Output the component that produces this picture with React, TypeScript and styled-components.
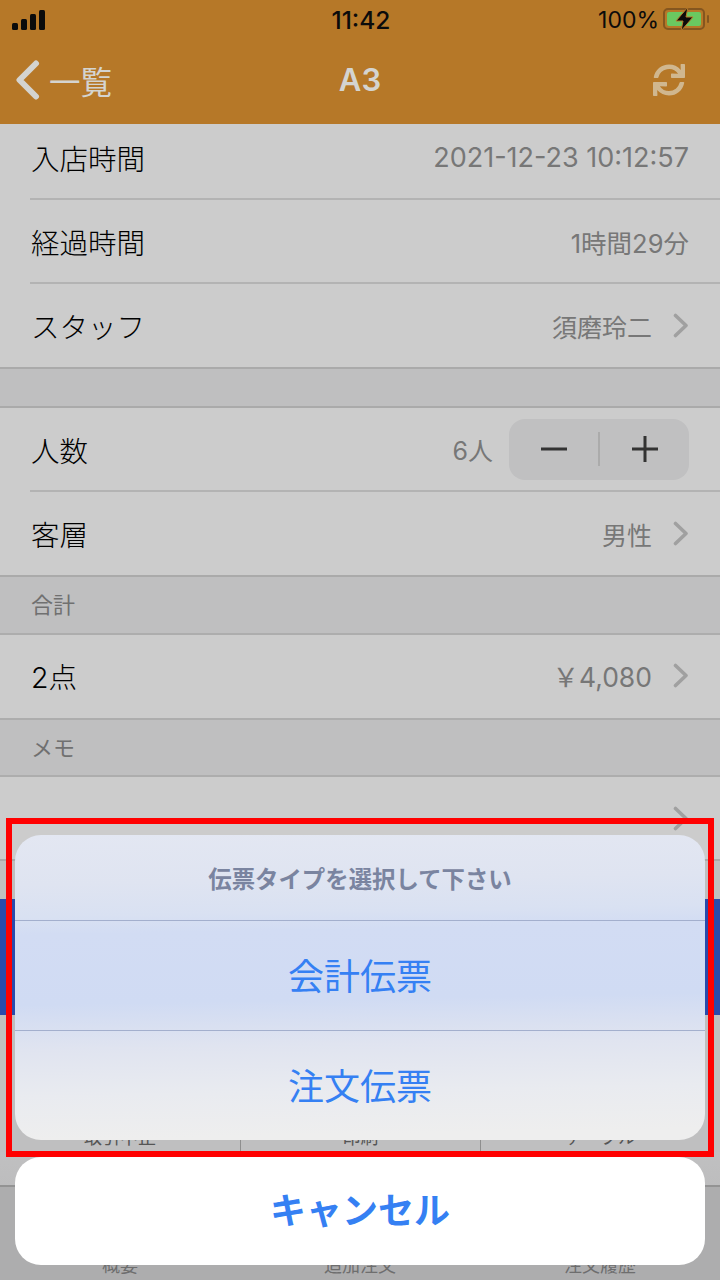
import React from 'react';
import styled, { createGlobalStyle } from 'styled-components';
import { FaSync } from 'react-icons/fa';

const GlobalStyle = createGlobalStyle`
  html, body {
    margin: 0;
    padding: 0;
    background: #bfbfc0;
  }
  * {
    box-sizing: border-box;
  }
`;

const Page = styled.div`
  position: relative;
  width: 720px;
  height: 1280px;
  overflow: hidden;
  display: flex;
  flex-direction: column;
  background: #bfbfc0;
  font-family: Inter, 'Noto Sans CJK JP', sans-serif;
`;

const Header = styled.div`
  height: 124px;
  flex: none;
  background: #b67828;
`;

const StatusBar = styled.div`
  height: 40px;
  padding: 0 10px 0 12px;
  display: grid;
  grid-template-columns: 1fr auto 1fr;
  align-items: center;
  color: #0b0b0b;
`;

const Clock = styled.div`
  font-size: 24.5px;
  font-weight: 500;
`;

const StatusRight = styled.div`
  display: flex;
  justify-content: flex-end;
  align-items: center;
  gap: 4px;
  font-size: 23px;
`;

const NavBar = styled.div`
  height: 83px;
  padding: 0 16px 4px;
  display: grid;
  grid-template-columns: 1fr auto 1fr;
  align-items: center;
  color: #d4d4d0;
`;

const BackLink = styled.div`
  display: flex;
  align-items: center;
  gap: 9px;
  font-size: 31.5px;
`;

const NavTitle = styled.div`
  font-size: 31px;
  font-weight: 600;
`;

const RefreshButton = styled.div`
  display: flex;
  justify-content: flex-end;
  padding-right: 19px;
  color: #d0b78f;
  font-size: 32px;
`;

const Row = styled.div<{ $height: number; $last?: boolean }>`
  height: ${p => p.$height}px;
  flex: none;
  background: #cccccc;
  padding-left: 30px;
  border-bottom: ${p => (p.$last ? '2px solid #aaaaaa' : 'none')};
`;

const RowBody = styled.div<{ $last?: boolean; $lift?: number }>`
  height: 100%;
  display: flex;
  align-items: center;
  justify-content: space-between;
  padding: 0 31px ${p => p.$lift ?? 0}px 1px;
  border-bottom: ${p => (p.$last ? 'none' : '2px solid #b3b3b3')};
`;

const RowLabel = styled.div`
  font-size: 28.5px;
  font-weight: 300;
  color: #000000;
`;

const RowRight = styled.div<{ $gap?: number }>`
  display: flex;
  align-items: center;
  gap: ${p => p.$gap ?? 21}px;
`;

const RowValue = styled.div<{ $size?: number }>`
  font-size: ${p => p.$size ?? 25}px;
  color: #777777;
`;

const Chevron = styled.svg`
  display: block;
  width: 16px;
  height: 25px;
  fill: none;
  stroke: #a0a0a0;
  stroke-width: 3.6;
  stroke-linecap: round;
  stroke-linejoin: round;
`;

const Stepper = styled.div`
  width: 180px;
  height: 61px;
  border-radius: 16px;
  background: #c0c0c1;
  display: grid;
  grid-template-columns: 1fr auto 1fr;
  align-items: center;
  justify-items: center;
`;

const StepperDivider = styled.div`
  width: 2px;
  height: 34px;
  background: #ababab;
`;

const StepperIcon = styled.svg`
  display: block;
  width: 28px;
  height: 28px;
  stroke: #333333;
  stroke-width: 3;
`;

const Gap = styled.div<{ $height: number }>`
  height: ${p => p.$height}px;
  flex: none;
  background: #bfbfc0;
  border-bottom: 2px solid #aaaaaa;
`;

const SectionHeader = styled.div<{ $height: number; $ruled?: boolean }>`
  height: ${p => p.$height}px;
  flex: none;
  padding: 0 0 4px 31px;
  display: flex;
  align-items: center;
  background: #bfbfc0;
  border-top: ${p => (p.$ruled ? '2px solid #adadad' : 'none')};
  border-bottom: 2px solid #adadad;
  color: #707070;
  font-size: 22px;
`;

const PlainGap = styled.div`
  height: 38px;
  flex: none;
  background: #bfbfc0;
`;

const PrimaryBar = styled.div`
  height: 116px;
  flex: none;
  background: #2a4bab;
`;

const ActionRow = styled.div`
  height: 137px;
  flex: none;
  display: grid;
  grid-template-columns: repeat(3, 1fr);
  background: #bfbfc0;
`;

const ActionCell = styled.div<{ $divided?: boolean }>`
  display: flex;
  align-items: flex-end;
  justify-content: center;
  padding-bottom: 3px;
  font-size: 18px;
  color: #555555;
  border-left: ${p => (p.$divided ? '1px solid #8e8e8e' : 'none')};
`;

const Filler = styled.div`
  height: 35px;
  flex: none;
  background: linear-gradient(#c0c0c1, #bdbdbe);
  border-bottom: 2px solid #939393;
`;

const TabBar = styled.div`
  flex: 1;
  display: grid;
  grid-template-columns: repeat(3, 1fr);
  background: #adadae;
`;

const TabItem = styled.div`
  display: flex;
  align-items: flex-end;
  justify-content: center;
  padding-bottom: 3px;
  font-size: 18px;
  color: #6e6e6e;
`;

const SheetOverlay = styled.div`
  position: absolute;
  left: 0;
  right: 0;
  top: 818px;
  display: flex;
  flex-direction: column;
`;

const HighlightFrame = styled.div`
  width: 708px;
  height: 339px;
  margin-left: 6px;
  padding: 11px 3px;
  border: 6px solid #ff0000;
`;

const Sheet = styled.div`
  height: 305px;
  border-radius: 26px;
  overflow: hidden;
  display: flex;
  flex-direction: column;
  background: linear-gradient(
    179deg,
    #e3e7f2 0,
    #dfe4f1 50px,
    #d9e1f2 82px,
    #d2dcf3 100px,
    #d0dbf3 170px,
    #d9e0f1 195px,
    #e0e4f0 215px,
    #e9ebf0 262px,
    #eeeeee 305px
  );
`;

const SheetTitle = styled.div`
  height: 86px;
  flex: none;
  display: flex;
  align-items: center;
  justify-content: center;
  font-size: 23.4px;
  font-weight: 600;
  color: #7a84a0;
  border-bottom: 1px solid #a3afcd;
`;

const SheetOption = styled.div<{ $height: number; $divided?: boolean }>`
  height: ${p => p.$height}px;
  flex: none;
  padding-bottom: 4px;
  display: flex;
  align-items: center;
  justify-content: center;
  font-size: 36px;
  color: #3580f3;
  border-bottom: ${p => (p.$divided ? '1px solid #a3afcd' : 'none')};
`;

const CancelButton = styled.div`
  height: 108px;
  margin: 0 15px;
  padding-bottom: 6px;
  border-radius: 26px;
  background: #ffffff;
  display: flex;
  align-items: center;
  justify-content: center;
  font-size: 36px;
  font-weight: 700;
  color: #3580f3;
`;

const IconSvg = styled.svg`
  display: block;
`;

const SignalIcon = () => (
  <IconSvg width="33" height="20" viewBox="0 0 33 20">
    <rect x="0" y="13" width="6" height="7" rx="1.5" fill="#0b0b0b" />
    <rect x="9" y="9" width="6" height="11" rx="1.5" fill="#0b0b0b" />
    <rect x="18" y="4" width="6" height="16" rx="1.5" fill="#0b0b0b" />
    <rect x="27" y="0" width="6" height="20" rx="1.5" fill="#0b0b0b" />
  </IconSvg>
);

const BatteryIcon = () => (
  <IconSvg width="47" height="26" viewBox="0 0 47 26">
    <rect x="1" y="2" width="40" height="20" rx="4" fill="none" stroke="#84561f" strokeWidth="2" />
    <rect x="4" y="5" width="34" height="14" rx="2" fill="#6ac860" />
    <rect x="44" y="8" width="2" height="8" rx="1" fill="#84561f" />
    <path d="M25 0 L13 14 H20 L18 24 L30 10 H23 Z" fill="#0b0b0b" stroke="#b67828" strokeWidth="1" />
  </IconSvg>
);

const BackChevron = () => (
  <IconSvg width="24" height="40" viewBox="0 0 24 40">
    <path
      d="M20 3.5 L3.5 20 L20 36.5"
      fill="none"
      stroke="#d4d4d0"
      strokeWidth="6"
      strokeLinecap="round"
      strokeLinejoin="round"
    />
  </IconSvg>
);

const RowChevron = () => (
  <Chevron viewBox="0 0 16 25">
    <path d="M2.5 2.5 L13 12.5 L2.5 22.5" />
  </Chevron>
);

export default function App() {
  return (
    <Page>
      <GlobalStyle />
      <Header>
        <StatusBar>
          <SignalIcon />
          <Clock>11:42</Clock>
          <StatusRight>
            100%
            <BatteryIcon />
          </StatusRight>
        </StatusBar>
        <NavBar>
          <BackLink>
            <BackChevron />
            一覧
          </BackLink>
          <NavTitle>A3</NavTitle>
          <RefreshButton>
            <FaSync />
          </RefreshButton>
        </NavBar>
      </Header>

      <Row $height={76}>
        <RowBody $lift={7}>
          <RowLabel>入店時間</RowLabel>
          <RowValue $size={27}>2021-12-23 10:12:57</RowValue>
        </RowBody>
      </Row>
      <Row $height={84}>
        <RowBody>
          <RowLabel>経過時間</RowLabel>
          <RowValue $size={25.5}>1時間29分</RowValue>
        </RowBody>
      </Row>
      <Row $height={85} $last>
        <RowBody $last>
          <RowLabel>スタッフ</RowLabel>
          <RowRight>
            <RowValue>須磨玲二</RowValue>
            <RowChevron />
          </RowRight>
        </RowBody>
      </Row>

      <Gap $height={39} />

      <Row $height={84}>
        <RowBody>
          <RowLabel>人数</RowLabel>
          <RowRight $gap={16}>
            <RowValue>6人</RowValue>
            <Stepper>
              <StepperIcon viewBox="0 0 28 28">
                <path d="M1 14 H27" />
              </StepperIcon>
              <StepperDivider />
              <StepperIcon viewBox="0 0 28 28">
                <path d="M1 14 H27 M14 1 V27" />
              </StepperIcon>
            </Stepper>
          </RowRight>
        </RowBody>
      </Row>
      <Row $height={85} $last>
        <RowBody $last>
          <RowLabel>客層</RowLabel>
          <RowRight>
            <RowValue>男性</RowValue>
            <RowChevron />
          </RowRight>
        </RowBody>
      </Row>

      <SectionHeader $height={58}>合計</SectionHeader>

      <Row $height={83}>
        <RowBody $last $lift={2}>
          <RowLabel>2点</RowLabel>
          <RowRight>
            <RowValue $size={26.5}>￥4,080</RowValue>
            <RowChevron />
          </RowRight>
        </RowBody>
      </Row>

      <SectionHeader $height={59} $ruled>
        メモ
      </SectionHeader>

      <Row $height={84} $last>
        <RowBody $last>
          <RowLabel />
          <RowChevron />
        </RowBody>
      </Row>

      <PlainGap />
      <PrimaryBar />

      <ActionRow>
        <ActionCell>取引中止</ActionCell>
        <ActionCell $divided>印刷</ActionCell>
        <ActionCell $divided>テーブル</ActionCell>
      </ActionRow>
      <Filler />
      <TabBar>
        <TabItem>概要</TabItem>
        <TabItem>追加注文</TabItem>
        <TabItem>注文履歴</TabItem>
      </TabBar>

      <SheetOverlay>
        <HighlightFrame>
          <Sheet>
            <SheetTitle>伝票タイプを選択して下さい</SheetTitle>
            <SheetOption $height={110} $divided>
              会計伝票
            </SheetOption>
            <SheetOption $height={109}>注文伝票</SheetOption>
          </Sheet>
        </HighlightFrame>
        <CancelButton>キャンセル</CancelButton>
      </SheetOverlay>
    </Page>
  );
}
